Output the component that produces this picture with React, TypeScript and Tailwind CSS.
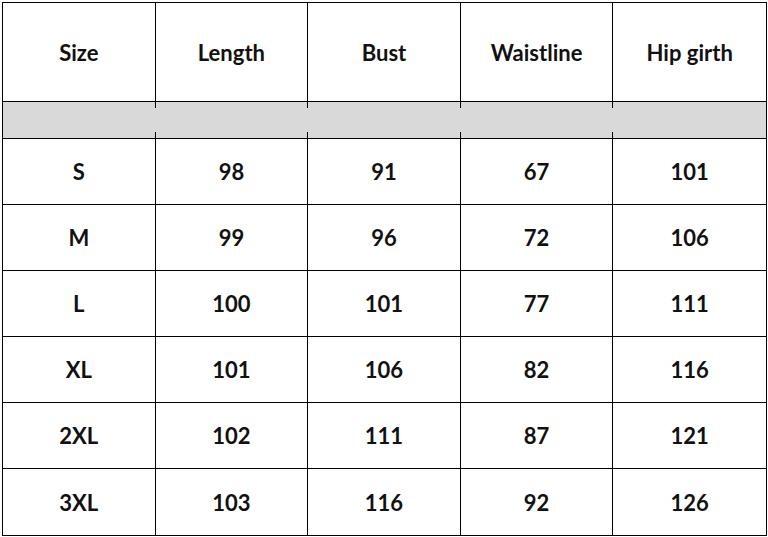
import React from "react";

const headers = ["Size", "Length", "Bust", "Waistline", "Hip girth"];

const rows = [
  ["S", "98", "91", "67", "101"],
  ["M", "99", "96", "72", "106"],
  ["L", "100", "101", "77", "111"],
  ["XL", "101", "106", "82", "116"],
  ["2XL", "102", "111", "87", "121"],
  ["3XL", "103", "116", "92", "126"],
];

export default function App() {
  return (
    <main className="w-[768px] h-[537px] bg-white pt-[2px] pl-[2px] font-['Comic_Sans_MS','Lato',sans-serif] text-[#111] font-bold text-[22px]">
      <div className="w-[765px] border-[1.5px] border-black">
        {/* header */}
        <div className="grid grid-cols-5 h-[99px] border-b-[1.5px] border-black">
          {headers.map((h, i) => (
            <div
              key={h}
              className={`flex items-center justify-center ${i < 4 ? "border-r border-black" : ""}`}
            >
              {h}
            </div>
          ))}
        </div>

        {/* grey spacer row, only stubs of the column lines show */}
        <div className="grid grid-cols-5 h-[37px] bg-[#d9d9d9] border-b-[1.5px] border-black">
          {headers.map((h, i) => (
            <div key={h} className="flex flex-col justify-between items-end">
              {i < 4 && (
                <>
                  <div className="w-px h-[6px] bg-black" />
                  <div className="w-px h-[6px] bg-black" />
                </>
              )}
            </div>
          ))}
        </div>

        {rows.map((r, ri) => (
          <div
            key={r[0]}
            className={`grid grid-cols-5 h-[66px] ${ri < rows.length - 1 ? "border-b-[1.5px] border-black" : ""}`}
          >
            {r.map((c, i) => (
              <div
                key={i}
                className={`flex items-center justify-center ${i < 4 ? "border-r border-black" : ""}`}
              >
                {c}
              </div>
            ))}
          </div>
        ))}
      </div>
    </main>
  );
}
